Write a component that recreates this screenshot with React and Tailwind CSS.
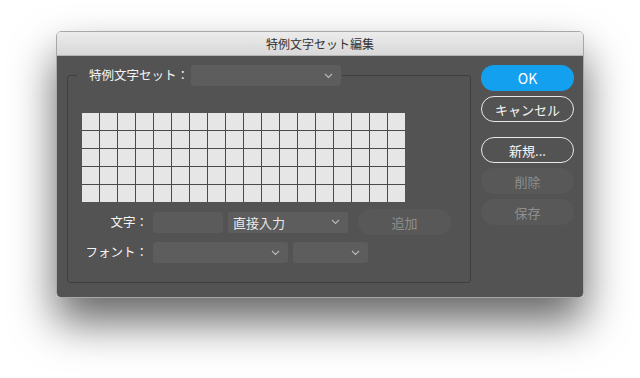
import React from "react";

const font = { fontFamily: '"Noto Sans CJK JP", "Noto Sans", sans-serif' };

function Chevron() {
  return (
    <svg width="9" height="6" viewBox="0 0 9 6" className="shrink-0">
      <polyline points="1,1 4.5,4.5 8,1" fill="none" stroke="#b8b8b8" strokeWidth="1.1" />
    </svg>
  );
}

function Select({ className = "", children }) {
  return (
    <div className={`flex h-[21px] items-center justify-between rounded-[3px] bg-[#5d5d5d] pl-[5px] pr-[8px] text-[13px] text-[#e8e8e8] ${className}`}>
      <span className="leading-none">{children}</span>
      <Chevron />
    </div>
  );
}

function Button({ variant = "default", className = "", children }) {
  const styles = {
    primary: "bg-[#13a0ee] text-white text-[14px]",
    default: "border border-[#e8e8e8] text-[#f6f6f6] text-[13px]",
    disabled: "bg-[#585858] text-[#8e8e8e] text-[13px]",
  };
  return (
    <div className={`flex h-[26px] items-center justify-center rounded-full leading-none ${styles[variant]} ${className}`}>
      {children}
    </div>
  );
}

export default function App() {
  return (
    <div className="h-[378px] w-[640px] overflow-hidden bg-white pl-[56px] pt-[31px]" style={font}>
      <div className="flex h-[267px] w-[528px] flex-col overflow-hidden rounded-[5px] border border-[#a8a8a8] shadow-[0_24px_44px_rgba(0,0,0,0.6)]">
        <div className="flex h-[24px] shrink-0 items-center justify-center border-b border-[#b4b4b4] bg-gradient-to-b from-[#ececec] to-[#d8d8d8] text-[12px] text-[#333]">
          特例文字セット編集
        </div>

        <div className="flex flex-1 gap-[10px] bg-[#535353] pl-[10px] pr-[9px] pt-[9px]">
          <fieldset className="m-0 h-[218px] w-[404px] shrink-0 rounded-[3px] border border-[#3f3f3f] p-0">
            <legend className="ml-[9px] flex items-center pl-[12px] pr-px">
              <span className="text-[12.5px] text-[#f4f4f4]">特例文字セット：</span>
              <Select className="ml-[2px] w-[150px]" />
            </legend>

            <div className="pl-[14px] pt-[27px]">
              <div className="grid w-fit grid-cols-[repeat(18,17px)] gap-px bg-[#4a4a4a]">
                {Array.from({ length: 90 }).map((_, i) => (
                  <div key={i} className="h-[17px] bg-[#e6e6e6]" />
                ))}
              </div>

              <div className="mt-[7px] flex h-[26px] items-center">
                <div className="w-[66px] text-right text-[12.5px] text-[#f4f4f4]">文字：</div>
                <div className="ml-[5px] h-[21px] w-[70px] rounded-[3px] bg-[#5b5b5b]" />
                <Select className="ml-[5px] w-[120px]">直接入力</Select>
                <Button variant="disabled" className="ml-[10px] w-[93px]">追加</Button>
              </div>

              <div className="mt-[7px] flex h-[21px] items-center">
                <div className="w-[66px] text-right text-[12.5px] text-[#f4f4f4]">フォント：</div>
                <Select className="ml-[5px] w-[135px]" />
                <Select className="ml-[5px] w-[75px]" />
              </div>
            </div>
          </fieldset>

          <div className="flex w-[93px] flex-col">
            <Button variant="primary">OK</Button>
            <Button className="mt-[5px]">キャンセル</Button>
            <Button className="mt-[15px]">新規...</Button>
            <Button variant="disabled" className="mt-[5px]">削除</Button>
            <Button variant="disabled" className="mt-[5px]">保存</Button>
          </div>
        </div>
      </div>
    </div>
  );
}
